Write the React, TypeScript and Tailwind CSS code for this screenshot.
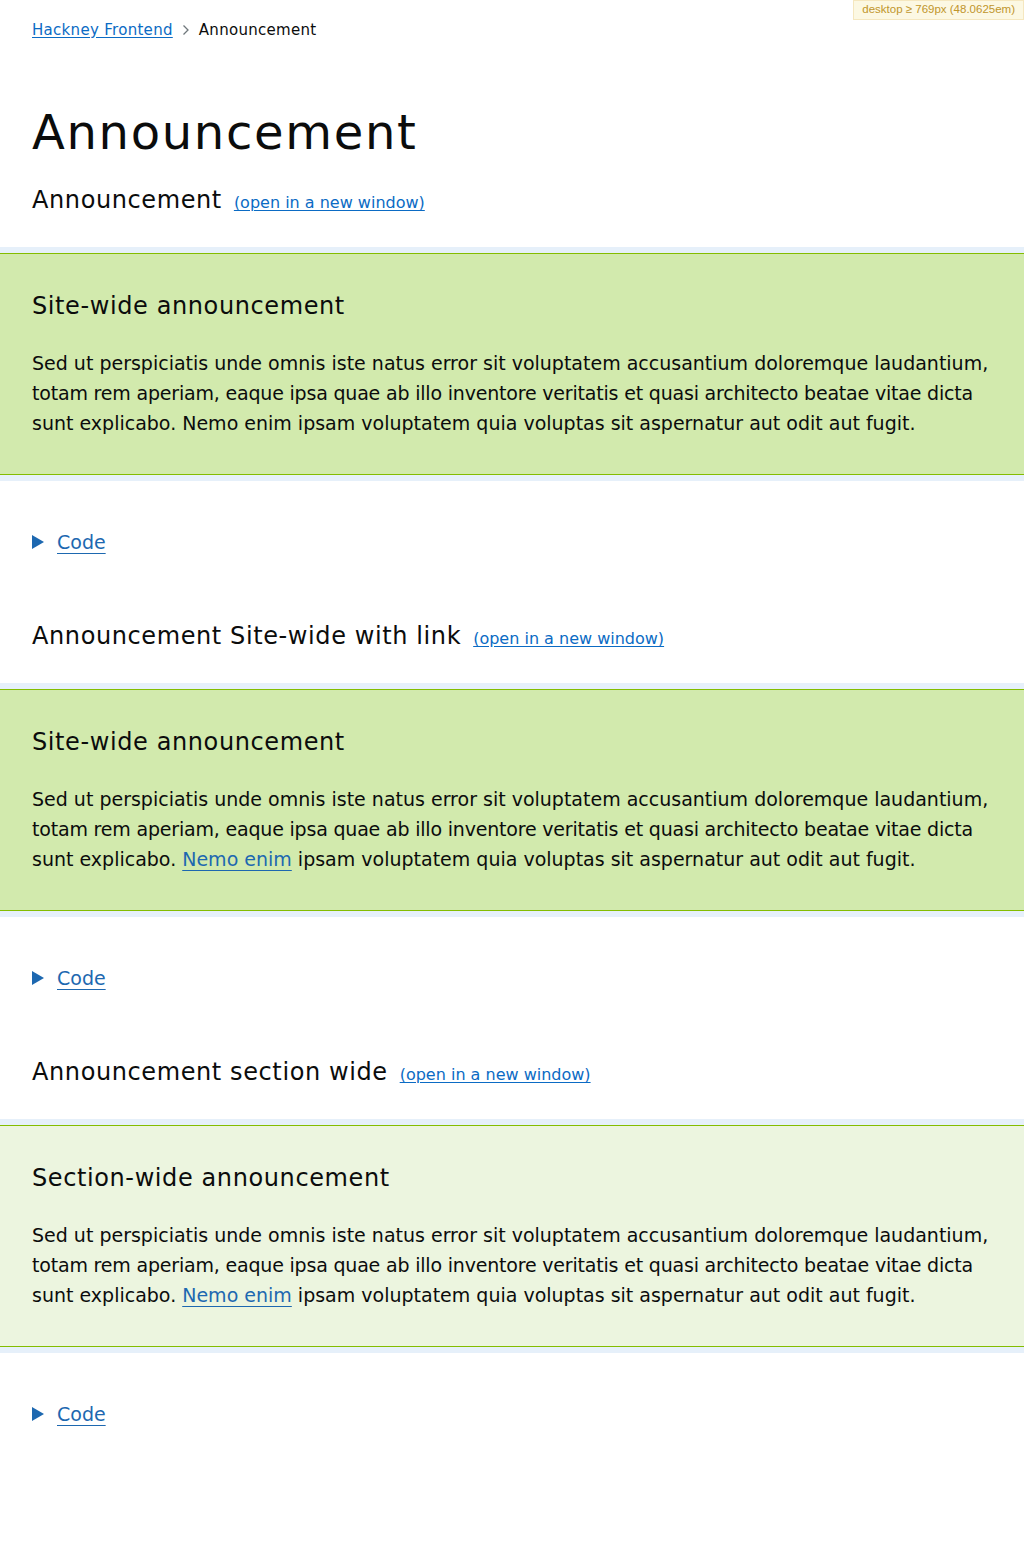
import React from "react";

const font = "font-['DejaVu_Sans',sans-serif]";

function OpenLink() {
  return (
    <a href="#" className="ml-3 text-[16px] text-[#0b6bc4] underline underline-offset-2">
      (open in a new window)
    </a>
  );
}

function CodeToggle() {
  return (
    <div className="flex items-center h-[30px] text-[19px] text-[#1d68b0]">
      <svg width="12" height="14" viewBox="0 0 12 14" className="mr-[13px]">
        <polygon points="0,0 12,7 0,14" fill="#1d68b0" />
      </svg>
      <a href="#" className="underline underline-offset-4">
        Code
      </a>
    </div>
  );
}

function Announcement({
  title,
  link,
  section,
}: {
  title: string;
  link?: boolean;
  section?: boolean;
}) {
  return (
    <div className="py-[6px] bg-[#e6f0fa]">
      <div
        className={
          "border-y border-[#84bd00] px-8 pt-[37px] pb-[36px] " +
          (section ? "bg-[#ecf5df]" : "bg-[#d2eaad]")
        }
      >
        <h3 className="text-[24px] leading-[30px] mb-[27px] tracking-[0.025em]">{title}</h3>
        <p className="text-[19px] leading-[30px]">
          <span className="block whitespace-nowrap">
            Sed ut perspiciatis unde omnis iste natus error sit voluptatem accusantium doloremque laudantium,
          </span>
          <span className="block whitespace-nowrap tracking-[-0.01em]">
            totam rem aperiam, eaque ipsa quae ab illo inventore veritatis et quasi architecto beatae vitae dicta
          </span>
          <span className="block whitespace-nowrap">
            sunt explicabo.{" "}
            {link ? (
              <a href="#" className="text-[#1d68b0] underline underline-offset-4">
                Nemo enim
              </a>
            ) : (
              "Nemo enim"
            )}{" "}
            ipsam voluptatem quia voluptas sit aspernatur aut odit aut fugit.
          </span>
        </p>
      </div>
    </div>
  );
}

function Example({
  name,
  title,
  link,
  section,
}: {
  name: string;
  title: string;
  link?: boolean;
  section?: boolean;
}) {
  return (
    <div>
      <div className="px-8 flex items-baseline h-[30px]">
        <h2 className="text-[24px] tracking-[0.025em]">{name}</h2>
        <OpenLink />
      </div>
      <div className="h-[35px]" />
      <Announcement title={title} link={link} section={section} />
      <div className="px-8 pt-[46px] pb-[61px]">
        <CodeToggle />
      </div>
    </div>
  );
}

export default function App() {
  return (
    <div className={`${font} relative min-h-[1552px] bg-white text-[#0b0c0c]`}>
      <div className="absolute right-0 top-0 bg-[#fcf8e3] border border-[#f5e7bf] px-2 h-[20px] flex items-center text-[11.5px] text-[#c0962c] font-['Liberation_Sans',sans-serif]">
        desktop ≥ 769px (48.0625em)
      </div>

      <nav className="px-8 pt-[19px] flex items-center text-[15px] tracking-[0.02em] h-[41px]">
        <a href="#" className="text-[#0b6bc4] underline underline-offset-2">
          Hackney Frontend
        </a>
        <svg width="8" height="12" viewBox="0 0 8 12" className="mx-[9px]">
          <polyline points="1.5,1.5 6,6 1.5,10.5" fill="none" stroke="#6f777b" strokeWidth="1.3" />
        </svg>
        <span>Announcement</span>
      </nav>

      <h1 className="px-8 mt-[61px] text-[48px] leading-[60px] tracking-[0.035em]">Announcement</h1>

      <div className="mt-[20px]">
        <Example name="Announcement" title="Site-wide announcement" />
        <Example name="Announcement Site-wide with link" title="Site-wide announcement" link />
        <Example name="Announcement section wide" title="Section-wide announcement" link section />
      </div>
    </div>
  );
}
